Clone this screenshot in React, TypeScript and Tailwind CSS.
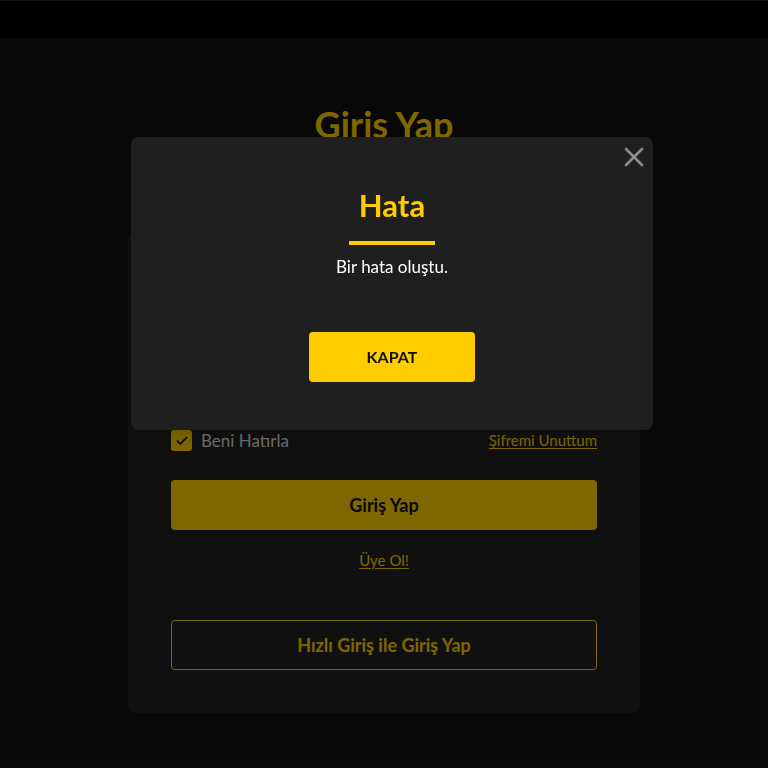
import { X, Check } from "lucide-react";

function Field({ label, type }: { label: string; type: string }) {
  return (
    <div className="flex flex-col gap-[6px]">
      <label className="text-[15px] leading-[20px] text-[#d6d6d6]">{label}</label>
      <input
        type={type}
        className="h-[48px] rounded-[4px] border border-[#3a3a3a] bg-[#181818] px-3 text-white outline-none"
      />
    </div>
  );
}

function LoginCard() {
  return (
    <div className="flex w-[512px] flex-col rounded-[8px] bg-[#202020] px-[43px] pt-[32px] pb-[43px]">
      <div className="flex flex-col gap-[18px]">
        <Field label="E-posta" type="email" />
        <Field label="Şifre" type="password" />
      </div>

      <div className="flex h-[21px] items-center justify-between">
        <label className="flex items-center gap-[9px]">
          <span className="flex h-[21px] w-[21px] items-center justify-center rounded-[3px] bg-[#ffcc00]">
            <Check size={14} strokeWidth={3} className="text-[#111]" />
          </span>
          <span className="text-[17px] text-[#d9d9d9]">Beni Hatırla</span>
        </label>
        <a className="text-[15px] text-[#ffcc00] underline underline-offset-2">
          Şifremi Unuttum
        </a>
      </div>

      <button className="mt-[29px] h-[50px] rounded-[4px] bg-[#ffcc00] text-[18px] font-bold text-[#111]">
        Giriş Yap
      </button>

      <a className="mt-[20px] self-center text-[15px] leading-[20px] text-[#ffcc00] underline underline-offset-2">
        Üye Ol!
      </a>

      <button className="mt-[50px] h-[50px] rounded-[4px] border border-[#ffcc00] text-[18px] font-bold text-[#ffcc00]">
        Hızlı Giriş ile Giriş Yap
      </button>
    </div>
  );
}

function ErrorModal() {
  return (
    <div className="fixed inset-0 bg-black/50">
      <div className="absolute left-[131px] top-[137px] flex w-[522px] flex-col items-center rounded-[8px] bg-[#1f1f1f] pt-[50px] pb-[48px] shadow-lg">
        <button className="absolute right-[3px] top-[4px] text-[#8c8c8c]">
          <X size={32} strokeWidth={2} />
        </button>
        <h2 className="text-[31px] font-bold leading-[36px] text-[#ffcc00]">Hata</h2>
        <div className="mt-[18px] h-[4px] w-[86px] bg-[#ffcc00]" />
        <p className="mt-[10px] text-[17px] leading-[24px] text-white">Bir hata oluştu.</p>
        <button className="mt-[53px] h-[50px] w-[166px] rounded-[4px] bg-[#ffcc00] text-[16px] font-bold text-[#111]">
          KAPAT
        </button>
      </div>
    </div>
  );
}

export default function App() {
  return (
    <div className="min-h-screen bg-[#111111] font-['Lato','Liberation_Sans',sans-serif]">
      <header className="h-[38px] border-t border-[#2a2a2a] bg-black" />
      <main className="flex flex-col items-center pt-[66px] pb-[60px]">
        <h1 className="text-[36px] font-bold leading-[40px] text-[#ffcc00]">Giris Yap</h1>
        <div className="mt-[88px]">
          <LoginCard />
        </div>
      </main>
      <ErrorModal />
    </div>
  );
}
